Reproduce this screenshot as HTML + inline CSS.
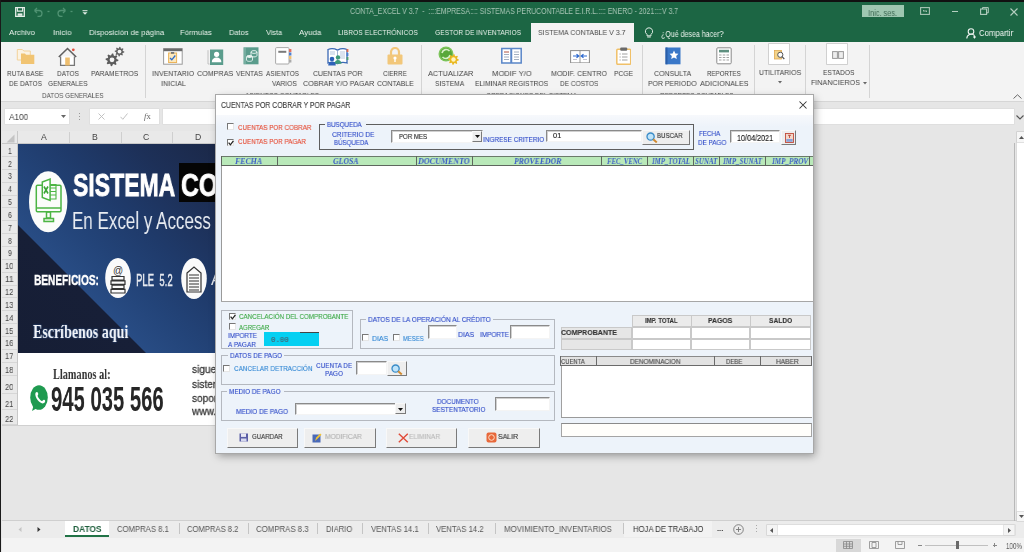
<!DOCTYPE html><html><head><meta charset="utf-8"><style>
html,body{margin:0;padding:0;width:1024px;height:552px;overflow:hidden;background:#e6e6e6;position:relative}
.t{position:absolute;white-space:nowrap;transform-origin:0 0;display:inline-block;will-change:transform}
</style></head><body>
<div style="position:absolute;left:0px;top:0px;width:1024px;height:42px;background:#1c6644"></div>
<svg style="position:absolute;left:14.5px;top:7px" width="10" height="10" viewBox="0 0 10 10"><path d="M0.7 0.7h8.6v8.6H0.7z" fill="none" stroke="#e6efe9" stroke-width="1.3"/><path d="M2.4 0.7v3.4h5.2V0.7" fill="none" stroke="#e6efe9" stroke-width="1.1"/><rect x="2.6" y="6.4" width="4.8" height="2.4" fill="#e6efe9"/></svg>
<svg style="position:absolute;left:33px;top:7px" width="42" height="10" viewBox="0 0 42 10"><g fill="none" stroke="#4f9272" stroke-width="1.3"><path d="M1.5 3.5h4.5a3 3 0 0 1 0 6H4.5M1.5 3.5l2.5-2.5M1.5 3.5l2.5 2.5"/><path d="M14.5 4.5h2"/><path d="M32.5 3.5h-4.5a3 3 0 0 0 0 6h1.5M32.5 3.5l-2.5-2.5M32.5 3.5l-2.5 2.5"/><path d="M37.5 4.5h2"/></g></svg>
<svg style="position:absolute;left:81.5px;top:9.5px" width="6" height="5" viewBox="0 0 6 5"><path d="M0.5 0.7h5" stroke="#e0ece4" stroke-width="1"/><path d="M0.5 2.3h5L3 4.8z" fill="#e0ece4"/></svg>
<span class="t" id="t0" style="left:350.10px;top:6.61px;font-size:8.70px;line-height:8.70px;font-family:'Liberation Sans', sans-serif;color:#a9c6b6;transform:scaleX(0.8000);">CONTA_EXCEL V 3.7&nbsp; - &nbsp;::::EMPRESA:::: SISTEMAS PERUCONTABLE E.I.R.L.:::: ENERO - 2021::::V 3.7</span>
<div style="position:absolute;left:861.5px;top:5px;width:42.5px;height:12px;background:#9ec7b1"></div>
<span class="t" id="t1" style="left:868.15px;top:8.61px;font-size:8.70px;line-height:8.70px;font-family:'Liberation Sans', sans-serif;color:#3f6a55;transform:scaleX(0.8485);">Inic. ses.</span>
<svg style="position:absolute;left:920px;top:7px" width="10" height="8" viewBox="0 0 10 8"><rect x="0.6" y="0.6" width="8.8" height="6.8" fill="none" stroke="#a9c6b5" stroke-width="1.1"/><path d="M3 4h4M3 4l1-1M7 4l-1 1" stroke="#a9c6b5" stroke-width="0.9"/></svg>
<div style="position:absolute;left:951.5px;top:10.8px;width:6.5px;height:1.2px;background:#b4cfc0"></div>
<svg style="position:absolute;left:980px;top:7px" width="9" height="8" viewBox="0 0 9 8"><rect x="0.6" y="2" width="6" height="5.4" fill="none" stroke="#b4cfc0" stroke-width="1.1"/><path d="M2.5 2V0.6h5.8v5.2H6.6" fill="none" stroke="#b4cfc0" stroke-width="1"/></svg>
<svg style="position:absolute;left:1010px;top:7.5px" width="8" height="8" viewBox="0 0 8 8"><path d="M0.5 0.5l7 7M7.5 0.5l-7 7" stroke="#b4cfc0" stroke-width="1.1"/></svg>
<span class="t" id="t2" style="left:9.02px;top:28.70px;font-size:8.12px;line-height:8.12px;font-family:'Liberation Sans', sans-serif;color:#eaf2ec;transform:scaleX(0.9630);">Archivo</span>
<span class="t" id="t3" style="left:53.00px;top:28.70px;font-size:8.12px;line-height:8.12px;font-family:'Liberation Sans', sans-serif;color:#eaf2ec;transform:scaleX(0.9737);">Inicio</span>
<span class="t" id="t4" style="left:88.61px;top:28.70px;font-size:8.12px;line-height:8.12px;font-family:'Liberation Sans', sans-serif;color:#eaf2ec;transform:scaleX(0.9494);">Disposición de página</span>
<span class="t" id="t5" style="left:180.03px;top:28.70px;font-size:8.12px;line-height:8.12px;font-family:'Liberation Sans', sans-serif;color:#eaf2ec;transform:scaleX(0.9412);">Fórmulas</span>
<span class="t" id="t6" style="left:229.04px;top:28.70px;font-size:8.12px;line-height:8.12px;font-family:'Liberation Sans', sans-serif;color:#eaf2ec;transform:scaleX(0.9190);">Datos</span>
<span class="t" id="t7" style="left:266.00px;top:28.70px;font-size:8.12px;line-height:8.12px;font-family:'Liberation Sans', sans-serif;color:#eaf2ec;transform:scaleX(0.9056);">Vista</span>
<span class="t" id="t8" style="left:299.00px;top:28.70px;font-size:8.12px;line-height:8.12px;font-family:'Liberation Sans', sans-serif;color:#eaf2ec;transform:scaleX(0.9783);">Ayuda</span>
<span class="t" id="t9" style="left:338.08px;top:28.70px;font-size:8.12px;line-height:8.12px;font-family:'Liberation Sans', sans-serif;color:#eaf2ec;transform:scaleX(0.8333);">LIBROS ELECTRÓNICOS</span>
<span class="t" id="t10" style="left:435.09px;top:28.70px;font-size:8.12px;line-height:8.12px;font-family:'Liberation Sans', sans-serif;color:#eaf2ec;transform:scaleX(0.8269);">GESTOR DE INVENTARIOS</span>
<div style="position:absolute;left:530.8px;top:23px;width:103px;height:19px;background:#f3f3f3"></div>
<span class="t" id="t11" style="left:538.00px;top:28.70px;font-size:8.12px;line-height:8.12px;font-family:'Liberation Sans', sans-serif;color:#4a4a4a;transform:scaleX(0.8598);">SISTEMA CONTABLE V 3.7</span>
<svg style="position:absolute;left:644px;top:26.5px" width="10" height="11" viewBox="0 0 10 11"><path d="M5 0.8a3.6 3.6 0 0 0-2 6.6v1.4h4V7.4A3.6 3.6 0 0 0 5 0.8z" fill="none" stroke="#e0ece4" stroke-width="1"/><path d="M3.2 10h3.6" stroke="#e0ece4" stroke-width="1"/></svg>
<span class="t" id="t12" style="left:660.64px;top:29.61px;font-size:8.70px;line-height:8.70px;font-family:'Liberation Sans', sans-serif;color:#eaf2ec;transform:scaleX(0.8117);">¿Qué desea hacer?</span>
<svg style="position:absolute;left:966px;top:27.5px" width="11" height="11" viewBox="0 0 11 11"><circle cx="5" cy="3.5" r="2.8" fill="none" stroke="#f0f5f2" stroke-width="1.1"/><path d="M0.8 10.5a4.4 4.4 0 0 1 7.6-3" fill="none" stroke="#f0f5f2" stroke-width="1.1"/><path d="M8.5 7.5v3M7 9h3" stroke="#f0f5f2" stroke-width="1"/></svg>
<span class="t" id="t13" style="left:978.56px;top:28.96px;font-size:8.99px;line-height:8.99px;font-family:'Liberation Sans', sans-serif;color:#f4f8f5;transform:scaleX(0.8625);">Compartir</span>
<div style="position:absolute;left:0px;top:42px;width:1024px;height:58.5px;background:#f3f3f3"></div>
<div style="position:absolute;left:0px;top:100.5px;width:1024px;height:1px;background:#d6d6d6"></div>
<div style="position:absolute;left:0px;top:101.5px;width:1024px;height:22.5px;background:#e6e6e6"></div>
<div style="position:absolute;left:145px;top:45px;width:1px;height:53px;background:#d4d4d4"></div>
<div style="position:absolute;left:420.5px;top:45px;width:1px;height:53px;background:#d4d4d4"></div>
<div style="position:absolute;left:641.8px;top:45px;width:1px;height:53px;background:#d4d4d4"></div>
<div style="position:absolute;left:754.4px;top:45px;width:1px;height:53px;background:#d4d4d4"></div>
<div style="position:absolute;left:805.2px;top:45px;width:1px;height:53px;background:#d4d4d4"></div>
<div style="position:absolute;left:869.2px;top:45px;width:1px;height:53px;background:#d4d4d4"></div>
<span class="t" id="t14" style="left:7.27px;top:69.92px;font-size:7.97px;line-height:7.97px;font-family:'Liberation Sans', sans-serif;color:#444444;transform:scaleX(0.8250);">RUTA BASE</span>
<span class="t" id="t15" style="left:9.09px;top:79.52px;font-size:7.97px;line-height:7.97px;font-family:'Liberation Sans', sans-serif;color:#444444;transform:scaleX(0.8250);">DE DATOS</span>
<span class="t" id="t16" style="left:56.64px;top:69.92px;font-size:7.97px;line-height:7.97px;font-family:'Liberation Sans', sans-serif;color:#444444;transform:scaleX(0.8222);">DATOS</span>
<span class="t" id="t17" style="left:48.00px;top:79.52px;font-size:7.97px;line-height:7.97px;font-family:'Liberation Sans', sans-serif;color:#444444;transform:scaleX(0.8082);">GENERALES</span>
<span class="t" id="t18" style="left:91.07px;top:69.92px;font-size:7.97px;line-height:7.97px;font-family:'Liberation Sans', sans-serif;color:#444444;transform:scaleX(0.8527);">PARAMETROS</span>
<span class="t" id="t19" style="left:42.10px;top:92.32px;font-size:7.97px;line-height:7.97px;font-family:'Liberation Sans', sans-serif;color:#555;transform:scaleX(0.7948);">DATOS GENERALES</span>
<span class="t" id="t20" style="left:152.00px;top:69.92px;font-size:7.97px;line-height:7.97px;font-family:'Liberation Sans', sans-serif;color:#444444;transform:scaleX(0.8750);">INVENTARIO</span>
<span class="t" id="t21" style="left:160.76px;top:79.52px;font-size:7.97px;line-height:7.97px;font-family:'Liberation Sans', sans-serif;color:#444444;transform:scaleX(0.8893);">INICIAL</span>
<span class="t" id="t22" style="left:197.43px;top:69.92px;font-size:7.97px;line-height:7.97px;font-family:'Liberation Sans', sans-serif;color:#444444;transform:scaleX(0.8975);">COMPRAS</span>
<span class="t" id="t23" style="left:236.07px;top:69.92px;font-size:7.97px;line-height:7.97px;font-family:'Liberation Sans', sans-serif;color:#444444;transform:scaleX(0.8548);">VENTAS</span>
<span class="t" id="t24" style="left:266.27px;top:69.92px;font-size:7.97px;line-height:7.97px;font-family:'Liberation Sans', sans-serif;color:#444444;transform:scaleX(0.8225);">ASIENTOS</span>
<span class="t" id="t25" style="left:271.55px;top:79.52px;font-size:7.97px;line-height:7.97px;font-family:'Liberation Sans', sans-serif;color:#444444;transform:scaleX(0.8414);">VARIOS</span>
<span class="t" id="t26" style="left:313.07px;top:69.92px;font-size:7.97px;line-height:7.97px;font-family:'Liberation Sans', sans-serif;color:#444444;transform:scaleX(0.8684);">CUENTAS POR</span>
<span class="t" id="t27" style="left:302.62px;top:79.52px;font-size:7.97px;line-height:7.97px;font-family:'Liberation Sans', sans-serif;color:#444444;transform:scaleX(0.8975);">COBRAR Y/O PAGAR</span>
<span class="t" id="t28" style="left:383.46px;top:69.92px;font-size:7.97px;line-height:7.97px;font-family:'Liberation Sans', sans-serif;color:#444444;transform:scaleX(0.7900);">CIERRE</span>
<span class="t" id="t29" style="left:377.00px;top:79.52px;font-size:7.97px;line-height:7.97px;font-family:'Liberation Sans', sans-serif;color:#444444;transform:scaleX(0.8690);">CONTABLE</span>
<span class="t" id="t30" style="left:245.00px;top:92.32px;font-size:7.97px;line-height:7.97px;font-family:'Liberation Sans', sans-serif;color:#555;transform:scaleX(0.8222);">ASIENTOS CONTABLES</span>
<span class="t" id="t31" style="left:427.77px;top:69.92px;font-size:7.97px;line-height:7.97px;font-family:'Liberation Sans', sans-serif;color:#444444;transform:scaleX(0.9163);">ACTUALIZAR</span>
<span class="t" id="t32" style="left:435.37px;top:79.52px;font-size:7.97px;line-height:7.97px;font-family:'Liberation Sans', sans-serif;color:#444444;transform:scaleX(0.8343);">SISTEMA</span>
<span class="t" id="t33" style="left:492.02px;top:69.92px;font-size:7.97px;line-height:7.97px;font-family:'Liberation Sans', sans-serif;color:#444444;transform:scaleX(0.9585);">MODIF Y/O</span>
<span class="t" id="t34" style="left:475.37px;top:79.52px;font-size:7.97px;line-height:7.97px;font-family:'Liberation Sans', sans-serif;color:#444444;transform:scaleX(0.8437);">ELIMINAR REGISTROS</span>
<span class="t" id="t35" style="left:551.24px;top:69.92px;font-size:7.97px;line-height:7.97px;font-family:'Liberation Sans', sans-serif;color:#444444;transform:scaleX(0.8905);">MODIF. CENTRO</span>
<span class="t" id="t36" style="left:560.09px;top:79.52px;font-size:7.97px;line-height:7.97px;font-family:'Liberation Sans', sans-serif;color:#444444;transform:scaleX(0.8191);">DE COSTOS</span>
<span class="t" id="t37" style="left:613.63px;top:69.92px;font-size:7.97px;line-height:7.97px;font-family:'Liberation Sans', sans-serif;color:#444444;transform:scaleX(0.8455);">PCGE</span>
<span class="t" id="t38" style="left:486.00px;top:92.32px;font-size:7.97px;line-height:7.97px;font-family:'Liberation Sans', sans-serif;color:#555;transform:scaleX(0.8053);">OPERACIONES DEL SISTEMA</span>
<span class="t" id="t39" style="left:654.00px;top:69.92px;font-size:7.97px;line-height:7.97px;font-family:'Liberation Sans', sans-serif;color:#444444;transform:scaleX(0.8810);">CONSULTA</span>
<span class="t" id="t40" style="left:648.37px;top:79.52px;font-size:7.97px;line-height:7.97px;font-family:'Liberation Sans', sans-serif;color:#444444;transform:scaleX(0.8661);">POR PERIODO</span>
<span class="t" id="t41" style="left:706.65px;top:69.92px;font-size:7.97px;line-height:7.97px;font-family:'Liberation Sans', sans-serif;color:#444444;transform:scaleX(0.7727);">REPORTES</span>
<span class="t" id="t42" style="left:699.62px;top:79.52px;font-size:7.97px;line-height:7.97px;font-family:'Liberation Sans', sans-serif;color:#444444;transform:scaleX(0.9057);">ADICIONALES</span>
<span class="t" id="t43" style="left:660.00px;top:92.32px;font-size:7.97px;line-height:7.97px;font-family:'Liberation Sans', sans-serif;color:#555;transform:scaleX(0.7849);">REPORTES CONTABLES</span>
<span class="t" id="t44" style="left:759.07px;top:69.12px;font-size:7.97px;line-height:7.97px;font-family:'Liberation Sans', sans-serif;color:#444444;transform:scaleX(0.8688);">UTILITARIOS</span>
<span class="t" id="t45" style="left:822.55px;top:69.12px;font-size:7.97px;line-height:7.97px;font-family:'Liberation Sans', sans-serif;color:#444444;transform:scaleX(0.8378);">ESTADOS</span>
<span class="t" id="t46" style="left:811.00px;top:79.12px;font-size:7.97px;line-height:7.97px;font-family:'Liberation Sans', sans-serif;color:#444444;transform:scaleX(0.8981);">FINANCIEROS</span>
<svg style="position:absolute;left:778px;top:81px" width="4" height="3"><path d="M0 0h4L2 2.5z" fill="#666"/></svg>
<svg style="position:absolute;left:862.5px;top:81.5px" width="4" height="3"><path d="M0 0h4L2 2.5z" fill="#666"/></svg>
<svg style="position:absolute;left:1013px;top:94px" width="9" height="5"><path d="M0.5 4.5L4.5 0.8L8.5 4.5" fill="none" stroke="#666" stroke-width="1"/></svg>
<div style="position:absolute;left:5px;top:108.8px;width:64.3px;height:15.5px;background:#fff;box-shadow:0 0 0 0.5px #d8d8d8"></div>
<span class="t" id="t47" style="left:8.62px;top:113.16px;font-size:8.99px;line-height:8.99px;font-family:'Liberation Sans', sans-serif;color:#444;transform:scaleX(0.9143);">A100</span>
<svg style="position:absolute;left:60.5px;top:115px" width="5" height="3"><path d="M0 0h5L2.5 3z" fill="#666"/></svg>
<div style="position:absolute;left:78.6px;top:112.5px;width:1px;height:1.2px;background:#999"></div>
<div style="position:absolute;left:78.6px;top:115.5px;width:1px;height:1.2px;background:#999"></div>
<div style="position:absolute;left:78.6px;top:118.5px;width:1px;height:1.2px;background:#999"></div>
<div style="position:absolute;left:89.5px;top:108.8px;width:69.8px;height:15.5px;background:#fff;box-shadow:0 0 0 0.5px #d8d8d8"></div>
<svg style="position:absolute;left:98px;top:113px" width="7" height="7"><path d="M0.5 0.5l6 6M6.5 0.5l-6 6" stroke="#bbb" stroke-width="0.9"/></svg>
<svg style="position:absolute;left:120px;top:113px" width="8" height="7"><path d="M0.5 3.8l2.3 2.5L7.5 0.5" fill="none" stroke="#bbb" stroke-width="0.9"/></svg>
<span class="t" id="t48" style="left:144.00px;top:111.61px;font-size:8.70px;line-height:8.70px;font-family:'Liberation Sans', sans-serif;color:#666;font-family:'Liberation Serif',serif;transform:scaleX(1.0000);"><i>f</i>x</span>
<div style="position:absolute;left:162.5px;top:108.8px;width:851.5px;height:15.5px;background:#fff;box-shadow:0 0 0 0.5px #d8d8d8"></div>
<svg style="position:absolute;left:1016px;top:114.5px" width="8" height="5"><path d="M0.5 0.5L4 4L7.5 0.5" fill="none" stroke="#555" stroke-width="1.1"/></svg>
<div style="position:absolute;left:1.5px;top:131.2px;width:215px;height:12.5px;background:#e9e9e9"></div>
<div style="position:absolute;left:1.5px;top:143.7px;width:16px;height:282px;background:#e9e9e9"></div>
<div style="position:absolute;left:17px;top:131.2px;width:0.8px;height:294px;background:#c8c8c8"></div>
<div style="position:absolute;left:1.5px;top:143.2px;width:215px;height:0.8px;background:#c8c8c8"></div>
<svg style="position:absolute;left:6px;top:134px" width="9" height="9"><path d="M8.5 0.5V8.5H0.5z" fill="#c4c4c4"/></svg>
<div style="position:absolute;left:68.5px;top:131.5px;width:0.8px;height:11.8px;background:#cfcfcf"></div>
<div style="position:absolute;left:120.5px;top:131.5px;width:0.8px;height:11.8px;background:#cfcfcf"></div>
<div style="position:absolute;left:171.5px;top:131.5px;width:0.8px;height:11.8px;background:#cfcfcf"></div>
<span class="t" id="t49" style="left:41.00px;top:133.21px;font-size:8.70px;line-height:8.70px;font-family:'Liberation Sans', sans-serif;color:#444;">A</span>
<span class="t" id="t50" style="left:92.00px;top:133.21px;font-size:8.70px;line-height:8.70px;font-family:'Liberation Sans', sans-serif;color:#444;">B</span>
<span class="t" id="t51" style="left:143.00px;top:133.21px;font-size:8.70px;line-height:8.70px;font-family:'Liberation Sans', sans-serif;color:#444;">C</span>
<span class="t" id="t52" style="left:194.60px;top:133.21px;font-size:8.70px;line-height:8.70px;font-family:'Liberation Sans', sans-serif;color:#444;">D</span>
<div style="position:absolute;left:1.5px;top:156.04999999999998px;width:15.5px;height:0.8px;background:#d6d6d6"></div>
<span class="t" id="t53" style="left:7.62px;top:146.86px;font-size:8.99px;line-height:8.99px;font-family:'Liberation Sans', sans-serif;color:#444;transform:scaleX(0.7800);">1</span>
<div style="position:absolute;left:1.5px;top:168.89999999999998px;width:15.5px;height:0.8px;background:#d6d6d6"></div>
<span class="t" id="t54" style="left:7.62px;top:159.56px;font-size:8.99px;line-height:8.99px;font-family:'Liberation Sans', sans-serif;color:#444;transform:scaleX(0.7800);">2</span>
<div style="position:absolute;left:1.5px;top:181.74999999999997px;width:15.5px;height:0.8px;background:#d6d6d6"></div>
<span class="t" id="t55" style="left:7.62px;top:172.26px;font-size:8.99px;line-height:8.99px;font-family:'Liberation Sans', sans-serif;color:#444;transform:scaleX(0.7800);">3</span>
<div style="position:absolute;left:1.5px;top:194.59999999999997px;width:15.5px;height:0.8px;background:#d6d6d6"></div>
<span class="t" id="t56" style="left:7.62px;top:184.96px;font-size:8.99px;line-height:8.99px;font-family:'Liberation Sans', sans-serif;color:#444;transform:scaleX(0.7800);">4</span>
<div style="position:absolute;left:1.5px;top:207.44999999999996px;width:15.5px;height:0.8px;background:#d6d6d6"></div>
<span class="t" id="t57" style="left:7.62px;top:197.66px;font-size:8.99px;line-height:8.99px;font-family:'Liberation Sans', sans-serif;color:#444;transform:scaleX(0.7800);">5</span>
<div style="position:absolute;left:1.5px;top:220.29999999999995px;width:15.5px;height:0.8px;background:#d6d6d6"></div>
<span class="t" id="t58" style="left:7.62px;top:211.36px;font-size:8.99px;line-height:8.99px;font-family:'Liberation Sans', sans-serif;color:#444;transform:scaleX(0.7800);">6</span>
<div style="position:absolute;left:1.5px;top:233.14999999999995px;width:15.5px;height:0.8px;background:#d6d6d6"></div>
<span class="t" id="t59" style="left:7.62px;top:224.06px;font-size:8.99px;line-height:8.99px;font-family:'Liberation Sans', sans-serif;color:#444;transform:scaleX(0.7800);">7</span>
<div style="position:absolute;left:1.5px;top:245.99999999999994px;width:15.5px;height:0.8px;background:#d6d6d6"></div>
<span class="t" id="t60" style="left:7.62px;top:236.76px;font-size:8.99px;line-height:8.99px;font-family:'Liberation Sans', sans-serif;color:#444;transform:scaleX(0.7800);">8</span>
<div style="position:absolute;left:1.5px;top:258.84999999999997px;width:15.5px;height:0.8px;background:#d6d6d6"></div>
<span class="t" id="t61" style="left:7.62px;top:249.46px;font-size:8.99px;line-height:8.99px;font-family:'Liberation Sans', sans-serif;color:#444;transform:scaleX(0.7800);">9</span>
<div style="position:absolute;left:1.5px;top:271.7px;width:15.5px;height:0.8px;background:#d6d6d6"></div>
<span class="t" id="t62" style="left:5.18px;top:262.16px;font-size:8.99px;line-height:8.99px;font-family:'Liberation Sans', sans-serif;color:#444;transform:scaleX(0.8400);">10</span>
<div style="position:absolute;left:1.5px;top:284.55px;width:15.5px;height:0.8px;background:#d6d6d6"></div>
<span class="t" id="t63" style="left:5.19px;top:274.86px;font-size:8.99px;line-height:8.99px;font-family:'Liberation Sans', sans-serif;color:#444;transform:scaleX(0.9333);">11</span>
<div style="position:absolute;left:1.5px;top:297.40000000000003px;width:15.5px;height:0.8px;background:#d6d6d6"></div>
<span class="t" id="t64" style="left:5.18px;top:287.56px;font-size:8.99px;line-height:8.99px;font-family:'Liberation Sans', sans-serif;color:#444;transform:scaleX(0.8400);">12</span>
<div style="position:absolute;left:1.5px;top:310.25000000000006px;width:15.5px;height:0.8px;background:#d6d6d6"></div>
<span class="t" id="t65" style="left:5.18px;top:301.26px;font-size:8.99px;line-height:8.99px;font-family:'Liberation Sans', sans-serif;color:#444;transform:scaleX(0.8400);">13</span>
<div style="position:absolute;left:1.5px;top:323.1000000000001px;width:15.5px;height:0.8px;background:#d6d6d6"></div>
<span class="t" id="t66" style="left:5.18px;top:313.96px;font-size:8.99px;line-height:8.99px;font-family:'Liberation Sans', sans-serif;color:#444;transform:scaleX(0.8400);">14</span>
<div style="position:absolute;left:1.5px;top:335.9500000000001px;width:15.5px;height:0.8px;background:#d6d6d6"></div>
<span class="t" id="t67" style="left:5.18px;top:326.66px;font-size:8.99px;line-height:8.99px;font-family:'Liberation Sans', sans-serif;color:#444;transform:scaleX(0.8400);">15</span>
<div style="position:absolute;left:1.5px;top:348.8000000000001px;width:15.5px;height:0.8px;background:#d6d6d6"></div>
<span class="t" id="t68" style="left:5.18px;top:339.36px;font-size:8.99px;line-height:8.99px;font-family:'Liberation Sans', sans-serif;color:#444;transform:scaleX(0.8400);">16</span>
<div style="position:absolute;left:1.5px;top:361.65000000000015px;width:15.5px;height:0.8px;background:#d6d6d6"></div>
<span class="t" id="t69" style="left:5.18px;top:352.06px;font-size:8.99px;line-height:8.99px;font-family:'Liberation Sans', sans-serif;color:#444;transform:scaleX(0.8400);">17</span>
<div style="position:absolute;left:1.5px;top:375.0px;width:15.5px;height:0.8px;background:#d6d6d6"></div>
<span class="t" id="t70" style="left:5.18px;top:365.76px;font-size:8.99px;line-height:8.99px;font-family:'Liberation Sans', sans-serif;color:#444;transform:scaleX(0.8400);">18</span>
<div style="position:absolute;left:1.5px;top:392.7px;width:15.5px;height:0.8px;background:#d6d6d6"></div>
<span class="t" id="t71" style="left:5.18px;top:383.16px;font-size:8.99px;line-height:8.99px;font-family:'Liberation Sans', sans-serif;color:#444;transform:scaleX(0.8400);">20</span>
<div style="position:absolute;left:1.5px;top:408.9px;width:15.5px;height:0.8px;background:#d6d6d6"></div>
<span class="t" id="t72" style="left:5.18px;top:399.56px;font-size:8.99px;line-height:8.99px;font-family:'Liberation Sans', sans-serif;color:#444;transform:scaleX(0.8400);">21</span>
<div style="position:absolute;left:1.5px;top:424.0px;width:15.5px;height:0.8px;background:#d6d6d6"></div>
<span class="t" id="t73" style="left:5.18px;top:414.76px;font-size:8.99px;line-height:8.99px;font-family:'Liberation Sans', sans-serif;color:#444;transform:scaleX(0.8400);">22</span>
<div style="position:absolute;left:1.5px;top:425px;width:215px;height:0.8px;background:#d0d0d0"></div>
<div style="position:absolute;left:1.5px;top:520.2px;width:1022.5px;height:17.6px;background:#ececec"></div>
<div style="position:absolute;left:1.5px;top:520.2px;width:1022.5px;height:0.8px;background:#cfcfcf"></div>
<div style="position:absolute;left:1.5px;top:537.8px;width:1022.5px;height:14.2px;background:#f3f3f3"></div>
<svg style="position:absolute;left:18px;top:527px" width="4" height="5"><path d="M3.5 0v5L0.5 2.5z" fill="#c4c4c4"/></svg>
<svg style="position:absolute;left:36.5px;top:527px" width="4" height="5"><path d="M0.5 0v5L3.5 2.5z" fill="#333"/></svg>
<div style="position:absolute;left:65.2px;top:521px;width:43.8px;height:15.6px;background:#fff"></div>
<div style="position:absolute;left:65.2px;top:535px;width:43.8px;height:1.8px;background:#217346"></div>
<span class="t" id="t74" style="left:73.00px;top:524.61px;font-size:8.70px;line-height:8.70px;font-family:'Liberation Sans', sans-serif;color:#1e5e3c;font-weight:bold;transform:scaleX(0.9655);">DATOS</span>
<span class="t" id="t75" style="left:117.38px;top:524.61px;font-size:8.70px;line-height:8.70px;font-family:'Liberation Sans', sans-serif;color:#555;transform:scaleX(0.8879);">COMPRAS 8.1</span>
<span class="t" id="t76" style="left:186.62px;top:524.61px;font-size:8.70px;line-height:8.70px;font-family:'Liberation Sans', sans-serif;color:#555;transform:scaleX(0.8810);">COMPRAS 8.2</span>
<span class="t" id="t77" style="left:256.00px;top:524.61px;font-size:8.70px;line-height:8.70px;font-family:'Liberation Sans', sans-serif;color:#555;transform:scaleX(0.9017);">COMPRAS 8.3</span>
<span class="t" id="t78" style="left:326.00px;top:524.61px;font-size:8.70px;line-height:8.70px;font-family:'Liberation Sans', sans-serif;color:#555;transform:scaleX(0.8767);">DIARIO</span>
<span class="t" id="t79" style="left:370.62px;top:524.61px;font-size:8.70px;line-height:8.70px;font-family:'Liberation Sans', sans-serif;color:#555;transform:scaleX(0.8943);">VENTAS 14.1</span>
<span class="t" id="t80" style="left:436.43px;top:524.61px;font-size:8.70px;line-height:8.70px;font-family:'Liberation Sans', sans-serif;color:#555;transform:scaleX(0.8925);">VENTAS 14.2</span>
<span class="t" id="t81" style="left:504.00px;top:524.61px;font-size:8.70px;line-height:8.70px;font-family:'Liberation Sans', sans-serif;color:#555;transform:scaleX(0.9076);">MOVIMIENTO_INVENTARIOS</span>
<div style="position:absolute;left:178.6px;top:523px;width:0.8px;height:11px;background:#c4c4c4"></div>
<div style="position:absolute;left:248.2px;top:523px;width:0.8px;height:11px;background:#c4c4c4"></div>
<div style="position:absolute;left:317.3px;top:523px;width:0.8px;height:11px;background:#c4c4c4"></div>
<div style="position:absolute;left:362px;top:523px;width:0.8px;height:11px;background:#c4c4c4"></div>
<div style="position:absolute;left:428px;top:523px;width:0.8px;height:11px;background:#c4c4c4"></div>
<div style="position:absolute;left:494.7px;top:523px;width:0.8px;height:11px;background:#c4c4c4"></div>
<div style="position:absolute;left:622.6px;top:523px;width:0.8px;height:11px;background:#c4c4c4"></div>
<div style="position:absolute;left:623.6px;top:521px;width:88.5px;height:16px;background:#f2f2f2"></div>
<span class="t" id="t82" style="left:633.19px;top:524.61px;font-size:8.70px;line-height:8.70px;font-family:'Liberation Sans', sans-serif;color:#333;transform:scaleX(0.8861);">HOJA DE TRABAJO</span>
<span class="t" id="t83" style="left:716.96px;top:525.08px;font-size:7.00px;line-height:7.00px;font-family:'Liberation Sans', sans-serif;color:#333;font-weight:bold;transform:scaleX(1.0833);">...</span>
<svg style="position:absolute;left:733px;top:523.5px" width="11" height="11"><circle cx="5.5" cy="5.5" r="4.8" fill="none" stroke="#777" stroke-width="0.9"/><path d="M5.5 3v5M3 5.5h5" stroke="#777" stroke-width="0.9"/></svg>
<div style="position:absolute;left:755.5px;top:525px;width:0.8px;height:1px;background:#aaa"></div>
<div style="position:absolute;left:755.5px;top:528px;width:0.8px;height:1px;background:#aaa"></div>
<div style="position:absolute;left:755.5px;top:531px;width:0.8px;height:1px;background:#aaa"></div>
<div style="position:absolute;left:766.5px;top:525px;width:248px;height:10px;background:#fff;box-shadow:0 0 0 0.6px #d4d4d4"></div>
<div style="position:absolute;left:766.5px;top:525px;width:10px;height:10px;background:#f4f4f4;box-shadow:0 0 0 0.6px #d4d4d4"></div>
<div style="position:absolute;left:1004px;top:525px;width:10px;height:10px;background:#f4f4f4;box-shadow:0 0 0 0.6px #d4d4d4"></div>
<svg style="position:absolute;left:770px;top:527.5px" width="3" height="5"><path d="M3 0v5L0 2.5z" fill="#555"/></svg>
<svg style="position:absolute;left:1008px;top:527.5px" width="3" height="5"><path d="M0 0v5L3 2.5z" fill="#555"/></svg>
<div style="position:absolute;left:1014px;top:143px;width:0.9px;height:377.5px;background:#b8b8b8"></div>
<div style="position:absolute;left:1017.4px;top:132.4px;width:6.6px;height:388px;background:#fff;box-shadow:0 0 0 0.6px #d4d4d4"></div>
<div style="position:absolute;left:1017.4px;top:132.4px;width:6.6px;height:9.5px;background:#f6f6f6;box-shadow:0 0 0 0.6px #ccc"></div>
<div style="position:absolute;left:1017.4px;top:511.6px;width:6.6px;height:9px;background:#f6f6f6;box-shadow:0 0 0 0.6px #ccc"></div>
<svg style="position:absolute;left:1018.5px;top:135.5px" width="5" height="3"><path d="M0 3h5L2.5 0z" fill="#555"/></svg>
<svg style="position:absolute;left:1018.5px;top:515px" width="5" height="3"><path d="M0 0h5L2.5 3z" fill="#555"/></svg>
<div style="position:absolute;left:836px;top:538.8px;width:25px;height:13.2px;background:#d8d8d8"></div>
<svg style="position:absolute;left:843px;top:541px" width="10" height="8"><path d="M0.5 0.5h9v7h-9zM3.5 0.5v7M6.5 0.5v7M0.5 3h9M0.5 5.3h9" fill="none" stroke="#888" stroke-width="0.8"/></svg>
<svg style="position:absolute;left:869px;top:541px" width="10" height="8"><path d="M0.5 0.5h9v7h-9z" fill="none" stroke="#888" stroke-width="0.8"/><path d="M3 1.5h4v5H3z" fill="none" stroke="#888" stroke-width="0.8"/></svg>
<svg style="position:absolute;left:895px;top:541px" width="10" height="8"><path d="M0.5 0.5h9v7h-9z" fill="none" stroke="#888" stroke-width="0.8"/><path d="M3 0.5v3h4v-3" fill="none" stroke="#888" stroke-width="0.8"/></svg>
<div style="position:absolute;left:917.5px;top:544.6px;width:4px;height:0.9px;background:#888"></div>
<div style="position:absolute;left:925px;top:545px;width:63px;height:0.8px;background:#c0c0c0"></div>
<div style="position:absolute;left:956.3px;top:541.3px;width:3.2px;height:7.4px;background:#6a6a6a"></div>
<div style="position:absolute;left:992.5px;top:544.6px;width:4px;height:0.9px;background:#888"></div>
<div style="position:absolute;left:994.1px;top:543px;width:0.9px;height:4px;background:#888"></div>
<span class="t" id="t84" style="left:1006.14px;top:541.61px;font-size:8.70px;line-height:8.70px;font-family:'Liberation Sans', sans-serif;color:#5a5a5a;transform:scaleX(0.7182);">100%</span>
<div style="position:absolute;left:17.8px;top:144px;width:198.5px;height:208.5px;background:linear-gradient(45deg,#161e35 0%,#171f37 31.3%,#284c84 31.6%,#234479 45%,#1f3a6a 62%,#1d3058 80%,#1b2848 100%)"></div>
<svg style="position:absolute;left:29px;top:170.5px" width="40" height="62" viewBox="0 0 40 62"><ellipse cx="19.2" cy="30.7" rx="19.2" ry="30.5" fill="#fbfcfb"/><g fill="none" stroke="#4cb544" stroke-width="1.5"><rect x="7.3" y="14.2" width="24.7" height="26.5" rx="1.2"/><path d="M7.3 37h24.7"/><rect x="17.5" y="41" width="4" height="6"/><rect x="15" y="47.5" width="9.5" height="3" fill="#e8f4e6"/><path d="M21 13.5h6v14.5h-6M21 17h6M21 20.5h6M21 24h6" stroke-width="1.1"/><path d="M13.3 11l7.8-3v21.5l-7.8-3z" fill="#fff"/></g><path d="M15 15.5l4 7M19 15.5l-4 7" stroke="#3aa534" stroke-width="1.6"/></svg>
<span class="t" id="t85" style="left:73.00px;top:169.94px;font-size:31.59px;line-height:31.59px;font-family:'Liberation Sans', sans-serif;color:#ffffff;font-weight:bold;-webkit-text-stroke-width:0.9px;transform:scaleX(0.7286);">SISTEMA</span>
<div style="position:absolute;left:178.5px;top:163px;width:38px;height:39px;background:#050505"></div>
<span class="t" id="t86" style="left:181.22px;top:169.94px;font-size:31.59px;line-height:31.59px;font-family:'Liberation Sans', sans-serif;color:#ffffff;font-weight:bold;-webkit-text-stroke-width:0.9px;transform:scaleX(0.7826);">CO</span>
<span class="t" id="t87" style="left:71.57px;top:209.20px;font-size:23.77px;line-height:23.77px;font-family:'Liberation Sans', sans-serif;color:#e8ecf2;transform:scaleX(0.7152);">En Excel y Access</span>
<span class="t" id="t88" style="left:33.83px;top:272.83px;font-size:14.78px;line-height:14.78px;font-family:'Liberation Sans', sans-serif;color:#ffffff;font-weight:bold;-webkit-text-stroke-width:0.45px;transform:scaleX(0.6819);">BENEFICIOS:</span>
<svg style="position:absolute;left:104.5px;top:258px" width="27" height="41" viewBox="0 0 27 41"><ellipse cx="13" cy="20" rx="12.8" ry="20" fill="#fafafa"/><text x="13" y="16" text-anchor="middle" font-family="Liberation Sans" font-size="10" fill="#333">@</text><g fill="none" stroke="#333" stroke-width="1.2"><path d="M7 18.5h12v3.6H7zM6 22.8h14v3.6H6zM7 27.1h12v3.6H7zM6 31.4h14v3.6H6z"/></g></svg>
<span class="t" id="t89" style="left:136.40px;top:273.45px;font-size:15.94px;line-height:15.94px;font-family:'Liberation Sans', sans-serif;color:#e6e9ef;-webkit-text-stroke-width:0.5px;transform:scaleX(0.6000);">PLE&nbsp; 5.2</span>
<svg style="position:absolute;left:180.5px;top:258px" width="27" height="41" viewBox="0 0 27 41"><ellipse cx="13" cy="20.5" rx="12.8" ry="20.5" fill="#fafafa"/><g fill="none" stroke="#333" stroke-width="1.2"><path d="M6 15l7-6 7 6v19H6z"/><path d="M8 17h10M8 20h10M8 23h10M8 26h10M8 29h10M8 32h10"/></g></svg>
<span class="t" id="t90" style="left:211.00px;top:272.45px;font-size:15.94px;line-height:15.94px;font-family:'Liberation Sans', sans-serif;color:#e6e9ef;">A</span>
<span class="t" id="t91" style="left:33.00px;top:323.05px;font-size:18.46px;line-height:18.46px;font-family:'Liberation Serif', serif;color:#f2f4f8;font-weight:bold;text-shadow:0 0 2px #3a6ab0;transform:scaleX(0.7584);">Escríbenos aqui</span>
<div style="position:absolute;left:17.8px;top:352.5px;width:198.5px;height:72.5px;background:#ffffff;overflow:hidden"></div>
<span class="t" id="t92" style="left:52.50px;top:366.59px;font-size:15.08px;line-height:15.08px;font-family:'Liberation Serif', serif;color:#333;font-weight:bold;transform:scaleX(0.6831);">Llamanos al:</span>
<svg style="position:absolute;left:29.5px;top:385px" width="18" height="27" viewBox="0 0 18 27"><ellipse cx="9" cy="12.5" rx="8.8" ry="12.3" fill="#1f9a50"/><path d="M2 26l2-7 5 3z" fill="#1f9a50"/><path d="M5.8 7.5c1-1 2-0.5 2.4 1s-1 1.5-0.4 3 2.5 4 3.8 4.4 1.2-1.4 2.4-1.2 1.6 1.6 0.8 2.6-2 1.6-4 0.5S6.5 14 5.8 11.8s-0.6-3.4 0-4.3z" fill="#fff"/></svg>
<span class="t" id="t93" style="left:50.61px;top:381.53px;font-size:34.20px;line-height:34.20px;font-family:'Liberation Sans', sans-serif;color:#262626;font-weight:bold;transform:scaleX(0.5931);">945 035 566</span>
<span class="t" id="t94" style="left:192.40px;top:364.44px;font-size:11.00px;line-height:11.00px;font-family:'Liberation Sans', sans-serif;color:#383838;-webkit-text-stroke-width:0.3px;transform:scaleX(0.92);">sigue</span>
<span class="t" id="t95" style="left:192.40px;top:379.44px;font-size:11.00px;line-height:11.00px;font-family:'Liberation Sans', sans-serif;color:#383838;-webkit-text-stroke-width:0.3px;transform:scaleX(0.92);">sistem</span>
<span class="t" id="t96" style="left:192.40px;top:393.44px;font-size:11.00px;line-height:11.00px;font-family:'Liberation Sans', sans-serif;color:#383838;-webkit-text-stroke-width:0.3px;transform:scaleX(0.92);">sopor</span>
<span class="t" id="t97" style="left:192.40px;top:406.44px;font-size:11.00px;line-height:11.00px;font-family:'Liberation Sans', sans-serif;color:#383838;-webkit-text-stroke-width:0.3px;transform:scaleX(0.92);">www.p</span>
<div style="position:absolute;left:215.5px;top:94.5px;width:597px;height:358.8px;background:#edf3fa;box-shadow:0 0 0 1px #a8a8a8,2px 3px 8px rgba(0,0,0,0.35)"></div>
<div style="position:absolute;left:215.5px;top:94.5px;width:597px;height:20.5px;background:#ffffff"></div>
<div style="position:absolute;left:215.5px;top:115.0px;width:597px;height:12px;background:linear-gradient(#f7f9fc,#edf3fa)"></div>
<span class="t" id="t98" style="left:221.12px;top:100.96px;font-size:8.99px;line-height:8.99px;font-family:'Liberation Sans', sans-serif;color:#3a3a3a;-webkit-text-stroke-width:0.12px;transform:scaleX(0.7679);">CUENTAS POR COBRAR Y POR PAGAR</span>
<svg style="position:absolute;left:799px;top:101px" width="8" height="8"><path d="M0.5 0.5l7 7M7.5 0.5l-7 7" stroke="#333" stroke-width="1.05"/></svg>
<div style="position:absolute;left:227px;top:123.4px;width:7px;height:7px;background:#fff;border-top:1px solid #777;border-left:1px solid #777;border-bottom:1px solid #e6e6e6;border-right:1px solid #e6e6e6;box-sizing:border-box"></div>
<span class="t" id="t99" style="left:238.00px;top:123.77px;font-size:7.68px;line-height:7.68px;font-family:'Liberation Sans', sans-serif;color:#e64a32;-webkit-text-stroke-width:0.12px;transform:scaleX(0.8167);">CUENTAS POR COBRAR</span>
<div style="position:absolute;left:227px;top:138.6px;width:7px;height:7px;background:#fff;border-top:1px solid #777;border-left:1px solid #777;border-bottom:1px solid #e6e6e6;border-right:1px solid #e6e6e6;box-sizing:border-box"></div>
<svg style="position:absolute;left:228px;top:139.6px" width="6" height="6"><path d="M0.6 2.6l1.8 2.2L5.4 0.8" fill="none" stroke="#222" stroke-width="1.3"/></svg>
<span class="t" id="t100" style="left:238.00px;top:138.37px;font-size:7.68px;line-height:7.68px;font-family:'Liberation Sans', sans-serif;color:#e64a32;-webkit-text-stroke-width:0.12px;transform:scaleX(0.8157);">CUENTAS POR PAGAR</span>
<div style="position:absolute;left:319px;top:124.2px;width:375px;height:25.8px;border:1.5px solid #5e5e5e;box-sizing:border-box"></div>
<div style="position:absolute;left:324.5px;top:121px;width:41.5px;height:6px;background:#edf3fa"></div>
<span class="t" id="t101" style="left:326.81px;top:122.26px;font-size:7.10px;line-height:7.10px;font-family:'Liberation Sans', sans-serif;color:#2f4bc8;-webkit-text-stroke-width:0.12px;transform:scaleX(0.8725);">BUSQUEDA</span>
<span class="t" id="t102" style="left:331.76px;top:130.62px;font-size:7.39px;line-height:7.39px;font-family:'Liberation Sans', sans-serif;color:#2f4bc8;-webkit-text-stroke-width:0.12px;transform:scaleX(0.8957);">CRITERIO DE</span>
<span class="t" id="t103" style="left:334.09px;top:139.02px;font-size:7.39px;line-height:7.39px;font-family:'Liberation Sans', sans-serif;color:#2f4bc8;-webkit-text-stroke-width:0.12px;transform:scaleX(0.8286);">BÚSQUEDA</span>
<div style="position:absolute;left:391.3px;top:129.8px;width:91.5px;height:12.9px;background:#fff;border-top:1px solid #8a8a8a;border-left:1px solid #8a8a8a;border-bottom:1px solid #f4f4f4;border-right:1px solid #f4f4f4;box-sizing:border-box;box-shadow:inset 1px 1px 0 #d0d0d0"></div>
<span class="t" id="t104" style="left:399.00px;top:132.84px;font-size:7.25px;line-height:7.25px;font-family:'Liberation Sans', sans-serif;color:#222;-webkit-text-stroke-width:0.12px;transform:scaleX(0.8424);">POR MES</span>
<div style="position:absolute;left:471.5px;top:130.8px;width:10.6px;height:11px;background:#eeeeee;border-top:1px solid #f8f8f8;border-left:1px solid #f8f8f8;border-bottom:1.5px solid #7a7a7a;border-right:1.5px solid #7a7a7a;box-sizing:border-box"></div>
<svg style="position:absolute;left:474.5px;top:134.5px" width="5" height="3"><path d="M0 0h5L2.5 3z" fill="#111"/></svg>
<span class="t" id="t105" style="left:483.27px;top:135.97px;font-size:7.68px;line-height:7.68px;font-family:'Liberation Sans', sans-serif;color:#2f4bc8;-webkit-text-stroke-width:0.12px;transform:scaleX(0.8356);">INGRESE CRITERIO</span>
<div style="position:absolute;left:545.6px;top:129.8px;width:96.4px;height:12px;background:#fff;border-top:1px solid #8a8a8a;border-left:1px solid #8a8a8a;border-bottom:1px solid #f4f4f4;border-right:1px solid #f4f4f4;box-sizing:border-box;box-shadow:inset 1px 1px 0 #d0d0d0"></div>
<span class="t" id="t106" style="left:552.59px;top:132.24px;font-size:7.25px;line-height:7.25px;font-family:'Liberation Sans', sans-serif;color:#222;-webkit-text-stroke-width:0.12px;transform:scaleX(1.0250);">01</span>
<div style="position:absolute;left:642.3px;top:129.7px;width:47.4px;height:15px;background:#eeeeee;border-top:1px solid #f8f8f8;border-left:1px solid #f8f8f8;border-bottom:1.5px solid #7a7a7a;border-right:1.5px solid #7a7a7a;box-sizing:border-box"></div>
<svg style="position:absolute;left:645.5px;top:131.5px" width="12" height="11" viewBox="0 0 12 11"><circle cx="4.6" cy="4.6" r="3.6" fill="#bfe4fa" stroke="#3a8cc8" stroke-width="1.3"/><path d="M7.2 7.2l3.6 3.2" stroke="#d08a30" stroke-width="2"/></svg>
<span class="t" id="t107" style="left:656.82px;top:132.37px;font-size:7.68px;line-height:7.68px;font-family:'Liberation Sans', sans-serif;color:#333;-webkit-text-stroke-width:0.12px;transform:scaleX(0.8000);">BUSCAR</span>
<span class="t" id="t108" style="left:698.73px;top:130.39px;font-size:7.54px;line-height:7.54px;font-family:'Liberation Sans', sans-serif;color:#2f4bc8;-webkit-text-stroke-width:0.12px;transform:scaleX(0.8308);">FECHA</span>
<span class="t" id="t109" style="left:698.37px;top:139.19px;font-size:7.54px;line-height:7.54px;font-family:'Liberation Sans', sans-serif;color:#2f4bc8;-webkit-text-stroke-width:0.12px;transform:scaleX(0.8382);">DE PAGO</span>
<div style="position:absolute;left:729.8px;top:130.2px;width:50px;height:12.5px;background:#fff;border-top:1px solid #8a8a8a;border-left:1px solid #8a8a8a;border-bottom:1px solid #f4f4f4;border-right:1px solid #f4f4f4;box-sizing:border-box;box-shadow:inset 1px 1px 0 #d0d0d0"></div>
<span class="t" id="t110" style="left:737.45px;top:134.43px;font-size:8.55px;line-height:8.55px;font-family:'Liberation Sans', sans-serif;color:#111;-webkit-text-stroke-width:0.12px;transform:scaleX(0.8442);">10/04/2021</span>
<div style="position:absolute;left:781.4px;top:130.2px;width:14.9px;height:14.5px;background:#eeeeee;border-top:1px solid #f8f8f8;border-left:1px solid #f8f8f8;border-bottom:1.5px solid #7a7a7a;border-right:1.5px solid #7a7a7a;box-sizing:border-box"></div>
<svg style="position:absolute;left:784.5px;top:132.5px" width="9" height="10" viewBox="0 0 9 10"><rect x="0.5" y="0.5" width="8" height="9" fill="#f3d7c8" stroke="#c04a3a" stroke-width="0.9"/><rect x="1.3" y="6" width="6.4" height="2.8" fill="#8aa2d8"/><path d="M3 2.3h3M4.5 2v3" stroke="#c04a3a" stroke-width="0.9"/></svg>
<div style="position:absolute;left:221px;top:155.9px;width:591.5px;height:9.6px;background:#b9e9b9"></div>
<div style="position:absolute;left:221px;top:155.9px;width:591.5px;height:1px;background:#6b7a6b"></div>
<div style="position:absolute;left:221px;top:164.8px;width:591.5px;height:1px;background:#5e665e"></div>
<div style="position:absolute;left:220.5px;top:155.9px;width:1.2px;height:9.6px;background:#5e665e"></div>
<div style="position:absolute;left:276.9px;top:155.9px;width:1.2px;height:9.6px;background:#5e665e"></div>
<div style="position:absolute;left:416.1px;top:155.9px;width:1.2px;height:9.6px;background:#5e665e"></div>
<div style="position:absolute;left:471.8px;top:155.9px;width:1.2px;height:9.6px;background:#5e665e"></div>
<div style="position:absolute;left:600.9px;top:155.9px;width:1.2px;height:9.6px;background:#5e665e"></div>
<div style="position:absolute;left:647.2px;top:155.9px;width:1.2px;height:9.6px;background:#5e665e"></div>
<div style="position:absolute;left:693.2px;top:155.9px;width:1.2px;height:9.6px;background:#5e665e"></div>
<div style="position:absolute;left:718.7px;top:155.9px;width:1.2px;height:9.6px;background:#5e665e"></div>
<div style="position:absolute;left:765.0px;top:155.9px;width:1.2px;height:9.6px;background:#5e665e"></div>
<div style="position:absolute;left:809.0px;top:155.9px;width:1.2px;height:9.6px;background:#5e665e"></div>
<div style="position:absolute;left:221px;top:165.8px;width:591.5px;height:135.6px;background:#ffffff"></div>
<div style="position:absolute;left:220.6px;top:165.5px;width:0.9px;height:136px;background:#9a9a9a"></div>
<div style="position:absolute;left:220.6px;top:300.6px;width:592px;height:1px;background:#a6a6a6"></div>
<span class="t" id="t111" style="left:235.04px;top:157.22px;font-size:8.62px;line-height:8.62px;font-family:'Liberation Serif', serif;color:#3a5cc8;font-weight:bold;font-style:italic;-webkit-text-stroke-width:0;transform:scaleX(0.9103);">FECHA</span>
<span class="t" id="t112" style="left:333.43px;top:157.22px;font-size:8.62px;line-height:8.62px;font-family:'Liberation Serif', serif;color:#3a5cc8;font-weight:bold;font-style:italic;-webkit-text-stroke-width:0;transform:scaleX(0.9036);">GLOSA</span>
<span class="t" id="t113" style="left:418.23px;top:157.22px;font-size:8.62px;line-height:8.62px;font-family:'Liberation Serif', serif;color:#3a5cc8;font-weight:bold;font-style:italic;-webkit-text-stroke-width:0;transform:scaleX(0.9345);">DOCUMENTO</span>
<span class="t" id="t114" style="left:513.76px;top:157.22px;font-size:8.62px;line-height:8.62px;font-family:'Liberation Serif', serif;color:#3a5cc8;font-weight:bold;font-style:italic;-webkit-text-stroke-width:0;transform:scaleX(0.8981);">PROVEEDOR</span>
<span class="t" id="t115" style="left:606.71px;top:157.22px;font-size:8.62px;line-height:8.62px;font-family:'Liberation Serif', serif;color:#3a5cc8;font-weight:bold;font-style:italic;-webkit-text-stroke-width:0;transform:scaleX(0.7822);">FEC_VENC</span>
<span class="t" id="t116" style="left:652.00px;top:157.22px;font-size:8.62px;line-height:8.62px;font-family:'Liberation Serif', serif;color:#3a5cc8;font-weight:bold;font-style:italic;-webkit-text-stroke-width:0;transform:scaleX(0.7958);">IMP_TOTAL</span>
<span class="t" id="t117" style="left:695.36px;top:157.22px;font-size:8.62px;line-height:8.62px;font-family:'Liberation Serif', serif;color:#3a5cc8;font-weight:bold;font-style:italic;-webkit-text-stroke-width:0;transform:scaleX(0.8071);">SUNAT</span>
<span class="t" id="t118" style="left:723.00px;top:157.22px;font-size:8.62px;line-height:8.62px;font-family:'Liberation Serif', serif;color:#3a5cc8;font-weight:bold;font-style:italic;-webkit-text-stroke-width:0;transform:scaleX(0.8082);">IMP_SUNAT</span>
<span class="t" id="t119" style="left:771.73px;top:157.22px;font-size:8.62px;line-height:8.62px;font-family:'Liberation Serif', serif;color:#3a5cc8;font-weight:bold;font-style:italic;-webkit-text-stroke-width:0;transform:scaleX(0.8318);">IMP_PROV</span>
<div style="position:absolute;left:221.3px;top:310px;width:132.1px;height:39.3px;border:1px solid #b4b8bf;box-sizing:border-box"></div>
<div style="position:absolute;left:228.5px;top:312.6px;width:7px;height:7px;background:#fff;border-top:1px solid #777;border-left:1px solid #777;border-bottom:1px solid #e6e6e6;border-right:1px solid #e6e6e6;box-sizing:border-box"></div>
<svg style="position:absolute;left:229.5px;top:313.6px" width="6" height="6"><path d="M0.6 2.6l1.8 2.2L5.4 0.8" fill="none" stroke="#222" stroke-width="1.3"/></svg>
<span class="t" id="t120" style="left:239.47px;top:313.10px;font-size:8.12px;line-height:8.12px;font-family:'Liberation Sans', sans-serif;color:#3aa843;-webkit-text-stroke-width:0.12px;transform:scaleX(0.7697);">CANCELACIÓN DEL COMPROBANTE</span>
<div style="position:absolute;left:228.5px;top:322.8px;width:7px;height:7px;background:#fff;border-top:1px solid #777;border-left:1px solid #777;border-bottom:1px solid #e6e6e6;border-right:1px solid #e6e6e6;box-sizing:border-box"></div>
<span class="t" id="t121" style="left:239.48px;top:323.90px;font-size:8.12px;line-height:8.12px;font-family:'Liberation Sans', sans-serif;color:#3aa843;-webkit-text-stroke-width:0.12px;transform:scaleX(0.7450);">AGREGAR</span>
<span class="t" id="t122" style="left:227.73px;top:332.35px;font-size:7.83px;line-height:7.83px;font-family:'Liberation Sans', sans-serif;color:#2f4bc8;-webkit-text-stroke-width:0.12px;transform:scaleX(0.8171);">IMPORTE</span>
<span class="t" id="t123" style="left:227.73px;top:340.75px;font-size:7.83px;line-height:7.83px;font-family:'Liberation Sans', sans-serif;color:#2f4bc8;-webkit-text-stroke-width:0.12px;transform:scaleX(0.8265);">A PAGAR</span>
<div style="position:absolute;left:264px;top:332px;width:54.7px;height:13.5px;background:#05d0f2"></div>
<div style="position:absolute;left:300px;top:332px;width:18.7px;height:1.2px;background:#444"></div>
<span class="t" id="t124" style="left:271.02px;top:336.96px;font-size:7.73px;line-height:7.73px;font-family:'Liberation Mono', monospace;color:#4e5c6a;-webkit-text-stroke-width:0.12px;transform:scaleX(0.9526);">0.00</span>
<div style="position:absolute;left:360px;top:319px;width:194.6px;height:30px;border:1px solid #b4b8bf;box-sizing:border-box"></div>
<div style="position:absolute;left:366px;top:316px;width:127px;height:6px;background:#edf3fa"></div>
<span class="t" id="t125" style="left:368.26px;top:315.79px;font-size:7.54px;line-height:7.54px;font-family:'Liberation Sans', sans-serif;color:#2f4bc8;-webkit-text-stroke-width:0.12px;transform:scaleX(0.8620);">DATOS DE LA OPERACIÓN AL CRÉDITO</span>
<div style="position:absolute;left:362px;top:334px;width:7px;height:7px;background:#fff;border-top:1px solid #777;border-left:1px solid #777;border-bottom:1px solid #e6e6e6;border-right:1px solid #e6e6e6;box-sizing:border-box"></div>
<span class="t" id="t126" style="left:372.00px;top:334.95px;font-size:7.83px;line-height:7.83px;font-family:'Liberation Sans', sans-serif;color:#2f86d4;-webkit-text-stroke-width:0.12px;transform:scaleX(0.8889);">DIAS</span>
<div style="position:absolute;left:393px;top:334px;width:7px;height:7px;background:#fff;border-top:1px solid #777;border-left:1px solid #777;border-bottom:1px solid #e6e6e6;border-right:1px solid #e6e6e6;box-sizing:border-box"></div>
<span class="t" id="t127" style="left:403.00px;top:334.95px;font-size:7.83px;line-height:7.83px;font-family:'Liberation Sans', sans-serif;color:#2f86d4;-webkit-text-stroke-width:0.12px;transform:scaleX(0.7556);">MESES</span>
<div style="position:absolute;left:428px;top:325px;width:29.4px;height:14px;background:#fff;border-top:1px solid #8a8a8a;border-left:1px solid #8a8a8a;border-bottom:1px solid #f4f4f4;border-right:1px solid #f4f4f4;box-sizing:border-box;box-shadow:inset 1px 1px 0 #d0d0d0"></div>
<span class="t" id="t128" style="left:458.00px;top:330.75px;font-size:7.83px;line-height:7.83px;font-family:'Liberation Sans', sans-serif;color:#2f4bc8;-webkit-text-stroke-width:0.12px;transform:scaleX(0.8889);">DIAS</span>
<span class="t" id="t129" style="left:479.73px;top:330.75px;font-size:7.83px;line-height:7.83px;font-family:'Liberation Sans', sans-serif;color:#2f4bc8;-webkit-text-stroke-width:0.12px;transform:scaleX(0.8171);">IMPORTE</span>
<div style="position:absolute;left:510px;top:325px;width:40px;height:14px;background:#fff;border-top:1px solid #8a8a8a;border-left:1px solid #8a8a8a;border-bottom:1px solid #f4f4f4;border-right:1px solid #f4f4f4;box-sizing:border-box;box-shadow:inset 1px 1px 0 #d0d0d0"></div>
<div style="position:absolute;left:221.4px;top:354.6px;width:333.2px;height:30.4px;border:1px solid #b4b8bf;box-sizing:border-box"></div>
<div style="position:absolute;left:228px;top:352px;width:56px;height:6px;background:#edf3fa"></div>
<span class="t" id="t130" style="left:230.00px;top:351.79px;font-size:7.54px;line-height:7.54px;font-family:'Liberation Sans', sans-serif;color:#2f4bc8;-webkit-text-stroke-width:0.12px;transform:scaleX(0.8525);">DATOS DE PAGO</span>
<div style="position:absolute;left:223.4px;top:364.6px;width:7px;height:7px;background:#fff;border-top:1px solid #777;border-left:1px solid #777;border-bottom:1px solid #e6e6e6;border-right:1px solid #e6e6e6;box-sizing:border-box"></div>
<span class="t" id="t131" style="left:234.00px;top:364.75px;font-size:7.83px;line-height:7.83px;font-family:'Liberation Sans', sans-serif;color:#2f86d4;-webkit-text-stroke-width:0.12px;transform:scaleX(0.8125);">CANCELAR DETRACCIÓN</span>
<span class="t" id="t132" style="left:316.27px;top:361.75px;font-size:7.83px;line-height:7.83px;font-family:'Liberation Sans', sans-serif;color:#2f4bc8;-webkit-text-stroke-width:0.12px;transform:scaleX(0.8182);">CUENTA DE</span>
<span class="t" id="t133" style="left:325.00px;top:369.75px;font-size:7.83px;line-height:7.83px;font-family:'Liberation Sans', sans-serif;color:#2f4bc8;-webkit-text-stroke-width:0.12px;transform:scaleX(0.8182);">PAGO</span>
<div style="position:absolute;left:356px;top:361.4px;width:30.6px;height:13.6px;background:#fff;border-top:1px solid #8a8a8a;border-left:1px solid #8a8a8a;border-bottom:1px solid #f4f4f4;border-right:1px solid #f4f4f4;box-sizing:border-box;box-shadow:inset 1px 1px 0 #d0d0d0"></div>
<div style="position:absolute;left:387px;top:361.4px;width:19.6px;height:15px;background:#eeeeee;border-top:1px solid #f8f8f8;border-left:1px solid #f8f8f8;border-bottom:1.5px solid #7a7a7a;border-right:1.5px solid #7a7a7a;box-sizing:border-box"></div>
<svg style="position:absolute;left:391px;top:363.5px" width="12" height="11" viewBox="0 0 12 11"><circle cx="4.6" cy="4.6" r="3.6" fill="#bfe4fa" stroke="#3a8cc8" stroke-width="1.3"/><path d="M7.2 7.2l3.6 3.2" stroke="#d08a30" stroke-width="2"/></svg>
<div style="position:absolute;left:221.2px;top:391px;width:333.4px;height:30.3px;border:1px solid #b4b8bf;box-sizing:border-box"></div>
<div style="position:absolute;left:227px;top:388px;width:57px;height:6px;background:#edf3fa"></div>
<span class="t" id="t134" style="left:229.08px;top:387.97px;font-size:7.68px;line-height:7.68px;font-family:'Liberation Sans', sans-serif;color:#2f4bc8;-webkit-text-stroke-width:0.12px;transform:scaleX(0.8371);">MEDIO DE PAGO</span>
<span class="t" id="t135" style="left:236.43px;top:408.86px;font-size:7.10px;line-height:7.10px;font-family:'Liberation Sans', sans-serif;color:#2f4bc8;-webkit-text-stroke-width:0.12px;transform:scaleX(0.9140);">MEDIO DE PAGO</span>
<div style="position:absolute;left:294.5px;top:402.5px;width:111.5px;height:12.5px;background:#fff;border-top:1px solid #8a8a8a;border-left:1px solid #8a8a8a;border-bottom:1px solid #f4f4f4;border-right:1px solid #f4f4f4;box-sizing:border-box;box-shadow:inset 1px 1px 0 #d0d0d0"></div>
<div style="position:absolute;left:395px;top:403.3px;width:10.6px;height:11px;background:#eeeeee;border-top:1px solid #f8f8f8;border-left:1px solid #f8f8f8;border-bottom:1.5px solid #7a7a7a;border-right:1.5px solid #7a7a7a;box-sizing:border-box"></div>
<svg style="position:absolute;left:398px;top:407.5px" width="5" height="3"><path d="M0 0h5L2.5 3z" fill="#111"/></svg>
<span class="t" id="t136" style="left:437.00px;top:397.62px;font-size:7.39px;line-height:7.39px;font-family:'Liberation Sans', sans-serif;color:#2f4bc8;-webkit-text-stroke-width:0.12px;transform:scaleX(0.8625);">DOCUMENTO</span>
<span class="t" id="t137" style="left:431.63px;top:405.57px;font-size:7.68px;line-height:7.68px;font-family:'Liberation Sans', sans-serif;color:#2f4bc8;-webkit-text-stroke-width:0.12px;transform:scaleX(0.8429);">SESTENTATORIO</span>
<div style="position:absolute;left:495px;top:397.2px;width:55.4px;height:14px;background:#fff;border-top:1px solid #8a8a8a;border-left:1px solid #8a8a8a;border-bottom:1px solid #f4f4f4;border-right:1px solid #f4f4f4;box-sizing:border-box;box-shadow:inset 1px 1px 0 #d0d0d0"></div>
<div style="position:absolute;left:632px;top:315.2px;width:179px;height:11.4px;background:#ebebeb;border:1px solid #c9c9c9;box-sizing:border-box"></div>
<div style="position:absolute;left:690.5px;top:315.2px;width:1px;height:11.4px;background:#c9c9c9"></div>
<div style="position:absolute;left:749.5px;top:315.2px;width:1px;height:11.4px;background:#c9c9c9"></div>
<span class="t" id="t138" style="left:645.00px;top:317.30px;font-size:8.12px;line-height:8.12px;font-family:'Liberation Sans', sans-serif;color:#333;font-weight:bold;-webkit-text-stroke-width:0.12px;transform:scaleX(0.7386);">IMP. TOTAL</span>
<span class="t" id="t139" style="left:708.26px;top:317.30px;font-size:8.12px;line-height:8.12px;font-family:'Liberation Sans', sans-serif;color:#333;font-weight:bold;-webkit-text-stroke-width:0.12px;transform:scaleX(0.8448);">PAGOS</span>
<span class="t" id="t140" style="left:768.64px;top:317.30px;font-size:8.12px;line-height:8.12px;font-family:'Liberation Sans', sans-serif;color:#333;font-weight:bold;-webkit-text-stroke-width:0.12px;transform:scaleX(0.8214);">SALDO</span>
<div style="position:absolute;left:560.6px;top:326.6px;width:71.4px;height:12.2px;background:#e6e6e6;border:1px solid #c9c9c9;box-sizing:border-box"></div>
<div style="position:absolute;left:560.6px;top:338.8px;width:71.4px;height:11.4px;background:#e6e6e6;border:1px solid #c9c9c9;box-sizing:border-box"></div>
<div style="position:absolute;left:632px;top:326.6px;width:59px;height:12.2px;background:#fff;border:1px solid #c9c9c9;box-sizing:border-box"></div>
<div style="position:absolute;left:691px;top:326.6px;width:59px;height:12.2px;background:#fff;border:1px solid #c9c9c9;box-sizing:border-box"></div>
<div style="position:absolute;left:750px;top:326.6px;width:61px;height:12.2px;background:#fff;border:1px solid #c9c9c9;box-sizing:border-box"></div>
<div style="position:absolute;left:632px;top:338.8px;width:59px;height:11.4px;background:#fff;border:1px solid #c9c9c9;box-sizing:border-box"></div>
<div style="position:absolute;left:691px;top:338.8px;width:59px;height:11.4px;background:#fff;border:1px solid #c9c9c9;box-sizing:border-box"></div>
<div style="position:absolute;left:750px;top:338.8px;width:61px;height:11.4px;background:#fff;border:1px solid #c9c9c9;box-sizing:border-box"></div>
<span class="t" id="t141" style="left:561.07px;top:328.90px;font-size:8.12px;line-height:8.12px;font-family:'Liberation Sans', sans-serif;color:#333;font-weight:bold;-webkit-text-stroke-width:0.12px;transform:scaleX(0.8688);">COMPROBANTE</span>
<div style="position:absolute;left:560.6px;top:356.3px;width:251px;height:9.9px;background:#e2e2e2"></div>
<div style="position:absolute;left:560.6px;top:356.3px;width:251px;height:0.8px;background:#8a8a8a"></div>
<div style="position:absolute;left:560.6px;top:365.3px;width:251px;height:1px;background:#6a6a6a"></div>
<div style="position:absolute;left:560.1px;top:356.3px;width:1.1px;height:9.9px;background:#6a6a6a"></div>
<div style="position:absolute;left:595.6px;top:356.3px;width:1.1px;height:9.9px;background:#6a6a6a"></div>
<div style="position:absolute;left:714.0px;top:356.3px;width:1.1px;height:9.9px;background:#6a6a6a"></div>
<div style="position:absolute;left:759.7px;top:356.3px;width:1.1px;height:9.9px;background:#6a6a6a"></div>
<div style="position:absolute;left:810.5px;top:356.3px;width:1.1px;height:9.9px;background:#6a6a6a"></div>
<span class="t" id="t142" style="left:561.10px;top:357.84px;font-size:7.25px;line-height:7.25px;font-family:'Liberation Sans', sans-serif;color:#444;-webkit-text-stroke-width:0.12px;transform:scaleX(0.8100);">CUENTA</span>
<span class="t" id="t143" style="left:630.25px;top:357.84px;font-size:7.25px;line-height:7.25px;font-family:'Liberation Sans', sans-serif;color:#444;-webkit-text-stroke-width:0.12px;transform:scaleX(0.8825);">DENOMINACION</span>
<span class="t" id="t144" style="left:726.09px;top:357.84px;font-size:7.25px;line-height:7.25px;font-family:'Liberation Sans', sans-serif;color:#444;-webkit-text-stroke-width:0.12px;transform:scaleX(0.8250);">DEBE</span>
<span class="t" id="t145" style="left:775.57px;top:357.84px;font-size:7.25px;line-height:7.25px;font-family:'Liberation Sans', sans-serif;color:#444;-webkit-text-stroke-width:0.12px;transform:scaleX(0.9080);">HABER</span>
<div style="position:absolute;left:560.6px;top:366.2px;width:251.5px;height:52px;background:#fff;border-left:1px solid #a0a0a0;border-bottom:1.2px solid #9a9a9a;box-sizing:border-box"></div>
<div style="position:absolute;left:560.6px;top:422.7px;width:251.5px;height:14.3px;background:#fffefb;border:1px solid #a4a4a4;border-top:1.2px solid #8a8a8a;box-sizing:border-box"></div>
<div style="position:absolute;left:226.8px;top:428px;width:71.5px;height:19.6px;background:#eeeeee;border-top:1px solid #f8f8f8;border-left:1px solid #f8f8f8;border-bottom:1.5px solid #7a7a7a;border-right:1.5px solid #7a7a7a;box-sizing:border-box"></div>
<div style="position:absolute;left:303.9px;top:428px;width:71.80000000000001px;height:19.6px;background:#eeeeee;border-top:1px solid #f8f8f8;border-left:1px solid #f8f8f8;border-bottom:1.5px solid #7a7a7a;border-right:1.5px solid #7a7a7a;box-sizing:border-box"></div>
<div style="position:absolute;left:385.9px;top:428px;width:71.5px;height:19.6px;background:#eeeeee;border-top:1px solid #f8f8f8;border-left:1px solid #f8f8f8;border-bottom:1.5px solid #7a7a7a;border-right:1.5px solid #7a7a7a;box-sizing:border-box"></div>
<div style="position:absolute;left:468px;top:428px;width:72px;height:19.6px;background:#eeeeee;border-top:1px solid #f8f8f8;border-left:1px solid #f8f8f8;border-bottom:1.5px solid #7a7a7a;border-right:1.5px solid #7a7a7a;box-sizing:border-box"></div>
<svg style="position:absolute;left:239px;top:433px" width="10" height="9" viewBox="0 0 10 9"><path d="M0.5 0.5h8.5v8h-8.5z" fill="#5b5ea6"/><rect x="2" y="0.5" width="5" height="3.4" fill="#e8e8f4"/><rect x="2" y="5.5" width="5.5" height="3" fill="#d6d8ee"/></svg>
<span class="t" id="t146" style="left:251.55px;top:433.42px;font-size:7.39px;line-height:7.39px;font-family:'Liberation Sans', sans-serif;color:#333;-webkit-text-stroke-width:0.12px;transform:scaleX(0.8297);">GUARDAR</span>
<svg style="position:absolute;left:312px;top:432.5px" width="10" height="10" viewBox="0 0 10 10"><rect x="0.5" y="1.5" width="8" height="8" fill="#4a6ab8"/><path d="M3 8l1.2-3.5 4-4 1.3 1.3-4 4z" fill="#f4c430"/></svg>
<span class="t" id="t147" style="left:325.00px;top:433.42px;font-size:7.39px;line-height:7.39px;font-family:'Liberation Sans', sans-serif;color:#b0b0b0;-webkit-text-stroke-width:0.12px;transform:scaleX(0.8902);">MODIFICAR</span>
<svg style="position:absolute;left:397.5px;top:433px" width="11" height="10"><path d="M0.8 0.8l9 8.4M9.8 0.8l-9 8.4" stroke="#e04a38" stroke-width="1.4"/></svg>
<span class="t" id="t148" style="left:409.43px;top:433.42px;font-size:7.39px;line-height:7.39px;font-family:'Liberation Sans', sans-serif;color:#b8b8b8;-webkit-text-stroke-width:0.12px;transform:scaleX(0.8943);">ELIMINAR</span>
<svg style="position:absolute;left:485.8px;top:432px" width="11" height="11" viewBox="0 0 11 11"><rect x="0.5" y="0.5" width="10" height="10" rx="2" fill="#e8683a"/><circle cx="5.5" cy="5.5" r="2.8" fill="none" stroke="#fde0c8" stroke-width="1"/></svg>
<span class="t" id="t149" style="left:498.00px;top:433.42px;font-size:7.39px;line-height:7.39px;font-family:'Liberation Sans', sans-serif;color:#333;-webkit-text-stroke-width:0.12px;transform:scaleX(0.9429);">SALIR</span>
<svg style="position:absolute;left:16px;top:47px" width="19" height="18" viewBox="0 0 19 18"><path d="M1.3 2.5h5l1.5 1.5h6.5v9H1.3z" fill="#fbf3e4" stroke="#f3d29a" stroke-width="1"/><path d="M5 6.5h4l1 1.2h8.3v9.3H5z" fill="#f1c472"/></svg>
<svg style="position:absolute;left:58px;top:46.5px" width="19" height="19" viewBox="0 0 19 19"><path d="M2.6 9.5v9h13.8v-9" fill="#fff" stroke="#777" stroke-width="1.3"/><path d="M0.8 10L9.5 1.5L18.2 10" fill="none" stroke="#606060" stroke-width="1.6"/><rect x="7.2" y="10.5" width="4.6" height="8" fill="#eebe6e"/><circle cx="15.3" cy="2.8" r="1.4" fill="#e0503a"/></svg>
<svg style="position:absolute;left:104px;top:45.5px" width="22" height="21" viewBox="0 0 22 21"><polygon points="14.40,13.80 14.28,15.05 12.26,15.56 11.83,16.36 12.53,18.33 11.56,19.12 9.76,18.06 8.90,18.32 8.00,20.20 6.75,20.08 6.24,18.06 5.44,17.63 3.47,18.33 2.68,17.36 3.74,15.56 3.48,14.70 1.60,13.80 1.72,12.55 3.74,12.04 4.17,11.24 3.47,9.27 4.44,8.48 6.24,9.54 7.10,9.28 8.00,7.40 9.25,7.52 9.76,9.54 10.56,9.97 12.53,9.27 13.32,10.24 12.26,12.04 12.52,12.90" fill="#5c5c5c"/><circle cx="8" cy="13.8" r="2.4" fill="#f3f3f3"/><polygon points="20.30,5.60 20.21,6.54 18.69,6.92 18.37,7.52 18.89,8.99 18.17,9.59 16.82,8.79 16.17,8.99 15.50,10.40 14.56,10.31 14.18,8.79 13.58,8.47 12.11,8.99 11.51,8.27 12.31,6.92 12.11,6.27 10.70,5.60 10.79,4.66 12.31,4.28 12.63,3.68 12.11,2.21 12.83,1.61 14.18,2.41 14.83,2.21 15.50,0.80 16.44,0.89 16.82,2.41 17.42,2.73 18.89,2.21 19.49,2.93 18.69,4.28 18.89,4.93" fill="#626262"/><circle cx="15.5" cy="5.6" r="1.9" fill="#f3f3f3"/></svg>
<svg style="position:absolute;left:163px;top:47.8px" width="20" height="17" viewBox="0 0 20 17"><rect x="0.6" y="0.6" width="18.6" height="15.6" fill="#fff" stroke="#9a9a9a" stroke-width="1"/><rect x="0.6" y="0.6" width="18.6" height="2.6" fill="#6a6a6a"/><rect x="5.6" y="5" width="8" height="9.5" fill="#fde8bc" stroke="#eab35a" stroke-width="1"/><rect x="8" y="4" width="3.2" height="1.8" fill="#777"/><path d="M7 10l1.8 1.8L12.3 7.5" fill="none" stroke="#2f6cc8" stroke-width="1.3"/></svg>
<svg style="position:absolute;left:206.5px;top:47.5px" width="17" height="18" viewBox="0 0 17 18"><path d="M1 2.2V16h1.6" fill="none" stroke="#bbb" stroke-width="0.9"/><rect x="3" y="1.5" width="13.2" height="15.5" fill="#5a9c8c"/><circle cx="9.6" cy="6.3" r="2.6" fill="#fff"/><path d="M4.8 14.2c0-3 2.2-4.6 4.8-4.6s4.8 1.6 4.8 4.6z" fill="#fff"/></svg>
<svg style="position:absolute;left:242.5px;top:47.3px" width="16" height="18" viewBox="0 0 16 18"><rect x="0.5" y="0.3" width="15" height="17" fill="#5a9c8c"/><path d="M2 0.3v17" stroke="#9cc8bc" stroke-width="0.8"/><ellipse cx="11" cy="5" rx="3" ry="1.4" fill="none" stroke="#e8f3f0" stroke-width="0.9"/><path d="M8 5v3.5c0 .8 1.3 1.4 3 1.4s3-.6 3-1.4V5" fill="none" stroke="#e8f3f0" stroke-width="0.9"/><ellipse cx="6.5" cy="9.5" rx="3" ry="1.4" fill="#e8f3f0"/><path d="M3.5 9.5v3.5c0 .8 1.3 1.4 3 1.4s3-.6 3-1.4V9.5" fill="none" stroke="#e8f3f0" stroke-width="0.9"/></svg>
<svg style="position:absolute;left:275px;top:47px" width="17" height="18" viewBox="0 0 17 18"><rect x="0.6" y="0.6" width="13.4" height="16.4" rx="1" fill="#fff" stroke="#a8a8a8" stroke-width="1"/><rect x="3.3" y="3.8" width="8" height="2" fill="#7a7a7a"/><rect x="14" y="2" width="2.4" height="3" fill="#e07060"/><rect x="14" y="5.5" width="2.4" height="3" fill="#4f7fd0"/><rect x="14" y="9" width="2.4" height="3" fill="#f0c070"/><rect x="14" y="12.5" width="2.4" height="3" fill="#aaa"/></svg>
<svg style="position:absolute;left:327px;top:46.5px" width="22" height="19" viewBox="0 0 22 19"><path d="M1 2.5c3-1.2 6-1.2 9.5 0.6c3.5-1.8 6.5-1.8 9.5-0.6V16c-3-1-6-1-9.5 0.6C7 15 4 15 1 16z" fill="#fff" stroke="#3a68b4" stroke-width="1.3"/><path d="M10.5 3v13.5" stroke="#8aa0c8" stroke-width="0.8"/><path d="M3 5h5M3 7h5M13 5h5M13 7h5M13 9h5M13 11h5" stroke="#9ab0d0" stroke-width="0.7"/><rect x="19.6" y="2" width="1.8" height="3" fill="#e06a50"/><rect x="19.6" y="6" width="1.8" height="3" fill="#4a80d0"/><rect x="19.6" y="10" width="1.8" height="3" fill="#50a070"/><circle cx="11" cy="10.4" r="2.2" fill="#3e9a78"/><path d="M7.5 16.8c0-2.4 1.6-3.8 3.5-3.8s3.5 1.4 3.5 3.8z" fill="#3e9a78"/><circle cx="5" cy="12" r="2.3" fill="#2e62b8"/><path d="M1.2 18.6c0-2.6 1.7-4 3.8-4s3.8 1.4 3.8 4z" fill="#2e62b8"/></svg>
<svg style="position:absolute;left:387px;top:47px" width="16" height="18" viewBox="0 0 16 18"><path d="M4 8V5a4 4 0 0 1 8 0v3" fill="none" stroke="#f2c77a" stroke-width="2.2"/><rect x="0.5" y="7.5" width="15" height="10" rx="1" fill="#f2c77a"/><circle cx="8" cy="11" r="1.6" fill="#fff"/><rect x="7.3" y="11" width="1.4" height="4" fill="#fff"/></svg>
<svg style="position:absolute;left:438px;top:46px" width="22" height="21" viewBox="0 0 22 21"><circle cx="8" cy="8" r="7.5" fill="#7cc45a"/><circle cx="8" cy="8" r="6" fill="#58a83a"/><path d="M4 7a4.3 4.3 0 0 1 7.5-2M12 9a4.3 4.3 0 0 1-7.5 2" fill="none" stroke="#d8f0c8" stroke-width="1.6"/><polygon points="20.80,13.50 20.70,14.53 19.03,14.96 18.67,15.62 19.25,17.25 18.44,17.91 16.96,17.03 16.24,17.24 15.50,18.80 14.47,18.70 14.04,17.03 13.38,16.67 11.75,17.25 11.09,16.44 11.97,14.96 11.76,14.24 10.20,13.50 10.30,12.47 11.97,12.04 12.33,11.38 11.75,9.75 12.56,9.09 14.04,9.97 14.76,9.76 15.50,8.20 16.53,8.30 16.96,9.97 17.62,10.33 19.25,9.75 19.91,10.56 19.03,12.04 19.24,12.76" fill="#e9b820"/><circle cx="15.5" cy="13.5" r="2.2" fill="#fff3c0"/></svg>
<svg style="position:absolute;left:500.5px;top:47.3px" width="21" height="17" viewBox="0 0 21 17"><path d="M0.8 1.5h9.2v14.5H0.8z M10.5 1.5h9.7v14.5h-9.7z" fill="#fff" stroke="#5a86c8" stroke-width="1.5"/><path d="M3 5h5M3 7.5h5M3 10h5M13 5h5M13 7.5h5M13 10h5M3 12.5h5M13 12.5h5" stroke="#8a9ab0" stroke-width="0.8"/><path d="M3 5h5" stroke="#e07050" stroke-width="0.9"/></svg>
<svg style="position:absolute;left:569.5px;top:49.5px" width="20" height="13.5" viewBox="0 0 20 13.5"><rect x="0.6" y="0.6" width="18.8" height="12.3" fill="#fff" stroke="#8a8a8a" stroke-width="1"/><path d="M10 0.6v12.3" stroke="#8a8a8a" stroke-width="0.9"/><path d="M3 6h5.5M6.5 4.2L8.8 6L6.5 7.8M17 6h-5.5M13.5 4.2L11.2 6l2.3 1.8" fill="none" stroke="#2e6ad0" stroke-width="1.2"/><path d="M3 9.5h4M13 9.5h4" stroke="#aab" stroke-width="0.7"/></svg>
<svg style="position:absolute;left:615.5px;top:47px" width="15.5" height="18" viewBox="0 0 15.5 18"><rect x="0.8" y="2.3" width="13.9" height="15" rx="1" fill="#fff" stroke="#f0c068" stroke-width="1.5"/><rect x="4.2" y="0.5" width="7" height="3.3" rx="1" fill="#6a6a6a"/><path d="M3.5 7h1.2M6 7h5.5M3.5 10h1.2M6 10h5.5M3.5 13h1.2M6 13h5.5" stroke="#888" stroke-width="0.8"/></svg>
<svg style="position:absolute;left:664.8px;top:47px" width="16" height="17.5" viewBox="0 0 16 17.5"><rect x="0.5" y="0.5" width="15" height="16.8" fill="#3a78c8"/><rect x="0.5" y="0.5" width="2" height="16.8" fill="#2a5ea8"/><path d="M9 3.6l1.35 2.9 3.1.35-2.3 2.1.65 3.1L9 10.5l-2.8 1.55.65-3.1-2.3-2.1 3.1-.35z" fill="#fff"/></svg>
<svg style="position:absolute;left:715.8px;top:47px" width="16" height="17.5" viewBox="0 0 16 17.5"><rect x="0.8" y="0.8" width="14.4" height="16" rx="1" fill="#fff" stroke="#8a8a8a" stroke-width="1"/><rect x="3" y="2.8" width="10" height="2.6" fill="#5f9080"/><path d="M3 8h2.5M6.8 8h2.5M10.5 8h2.5M3 10.5h2.5M6.8 10.5h2.5M10.5 10.5h2.5M3 13h2.5M6.8 13h2.5M10.5 13h2.5" stroke="#999" stroke-width="0.9"/></svg>
<div style="position:absolute;left:769.4px;top:44.4px;width:20px;height:19.2px;background:#fff;box-shadow:0 0 0 0.8px #c8c8c8"></div>
<svg style="position:absolute;left:774px;top:49px" width="11" height="11" viewBox="0 0 11 11"><rect x="0.5" y="1.5" width="7" height="8.5" fill="#f3d38a" stroke="#e0a850" stroke-width="0.8"/><circle cx="6.3" cy="5.8" r="2.6" fill="#fff" stroke="#555" stroke-width="1"/><path d="M8 7.6l2.3 2.4" stroke="#555" stroke-width="1.2"/></svg>
<div style="position:absolute;left:827.4px;top:44.4px;width:20px;height:19.2px;background:#fff;box-shadow:0 0 0 0.8px #c8c8c8"></div>
<svg style="position:absolute;left:831.5px;top:50.5px" width="12" height="8" viewBox="0 0 12 8"><rect x="0.6" y="0.6" width="4.8" height="6.8" fill="#eee" stroke="#999" stroke-width="1"/><rect x="6.6" y="0.6" width="4.8" height="6.8" fill="#eee" stroke="#999" stroke-width="1"/></svg>
<div style="position:absolute;left:0px;top:0px;width:1024px;height:1.5px;background:#111"></div>
<div style="position:absolute;left:0px;top:0px;width:1.2px;height:552px;background:#1a1a1a"></div>
</body></html>
